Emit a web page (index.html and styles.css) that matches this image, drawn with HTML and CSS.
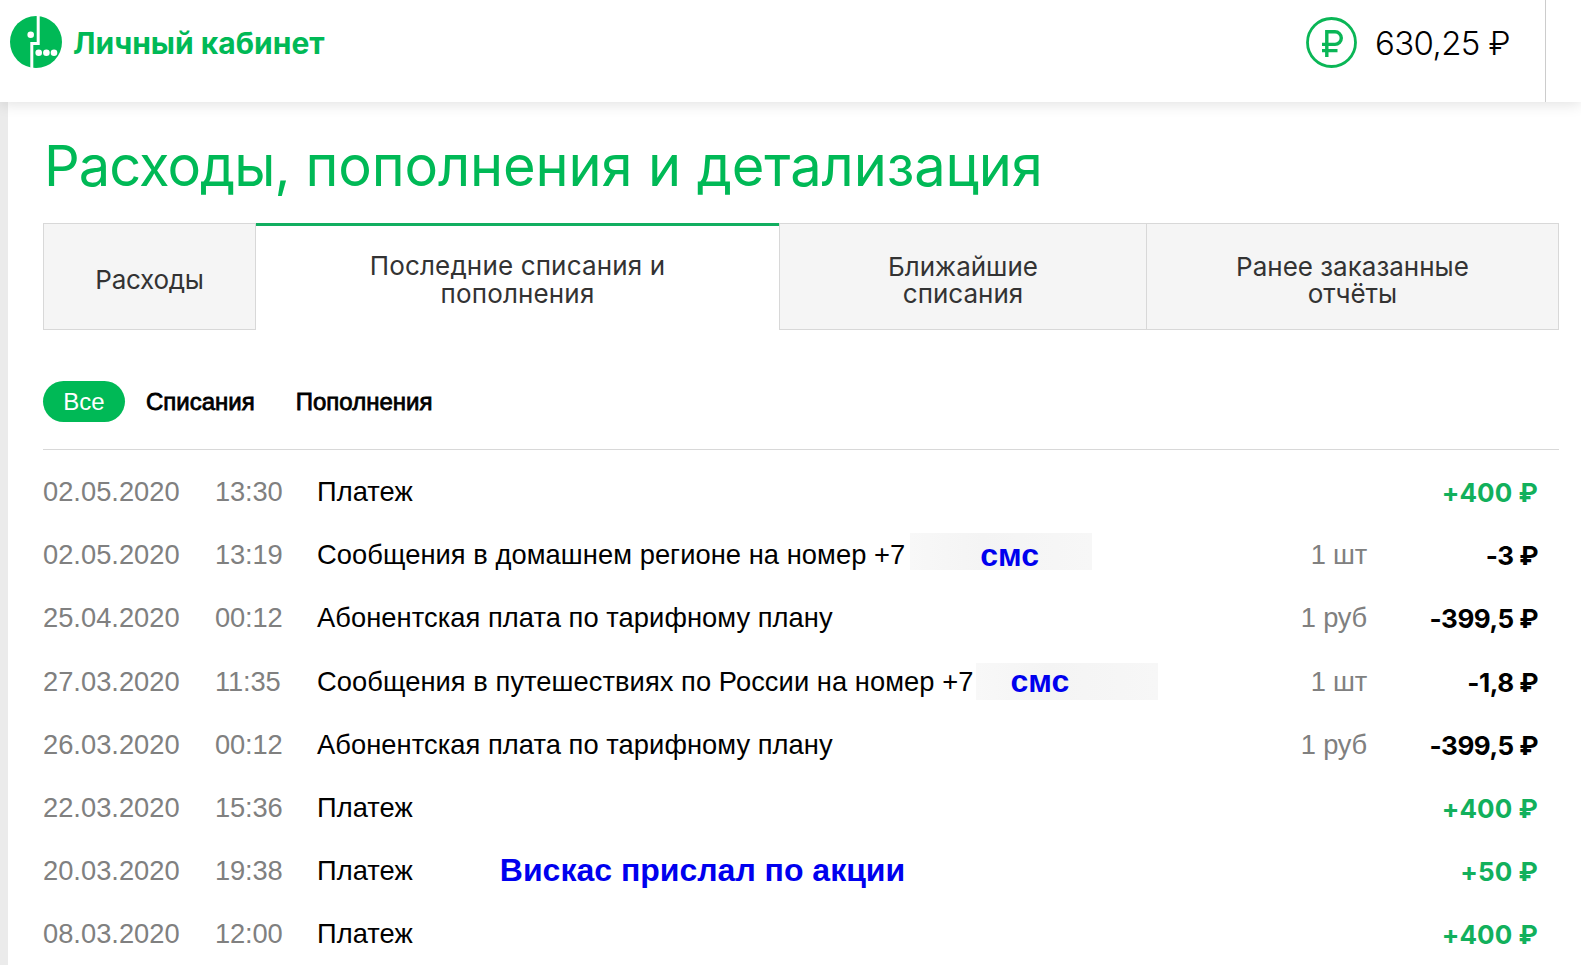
FILE: index.html
```
<!DOCTYPE html>
<html lang="ru">
<head>
<meta charset="utf-8">
<title>Личный кабинет</title>
<link rel="stylesheet" href="styles.css">
</head>
<body>
<header class="header">
  <a class="brand">
    <svg class="logo" viewBox="0 0 52 52" width="52" height="52">
      <circle cx="26" cy="26" r="26" fill="#00b956"/>
      <path d="M28.2 0V27.4H21.8V52" fill="none" stroke="#fff" stroke-width="3"/>
      <g fill="#fff"><circle cx="20.7" cy="18.8" r="3.3"/><circle cx="28.7" cy="36.8" r="3.3"/><circle cx="36.4" cy="36.8" r="3.3"/><circle cx="44" cy="36.8" r="3.3"/></g>
    </svg>
    <span class="brand-name">Личный кабинет</span>
  </a>
  <div class="balance">
    <svg class="coin" viewBox="0 0 51 51" width="51" height="51" fill="none" stroke="#0ab656">
      <circle cx="25.5" cy="25.5" r="24" stroke-width="2.8"/>
      <path d="M20.8 40V14.8H29a6.3 6.3 0 0 1 0 12.6H16M16 33.6H31.5" stroke-width="3.4"/>
    </svg>
    <span class="balance-sum">630,25 ₽</span>
  </div>
</header>
<main class="page">
  <h1 class="title"><span class="title-lead">Расходы,</span> пополнения и детализация</h1>
  <nav class="tabs">
    <a class="tab tab-short">Расходы</a>
    <a class="tab tab-active">Последние списания и<br>пополнения</a>
    <a class="tab">Ближайшие<br>списания</a>
    <a class="tab">Ранее заказанные<br>отчёты</a>
  </nav>
  <div class="filters">
    <a class="filter filter-active">Все</a>
    <a class="filter">Списания</a>
    <a class="filter">Пополнения</a>
  </div>
  <section class="list">
    <div class="row"><span class="date">02.05.2020</span><span class="time">13:30</span><span class="desc">Платеж</span><span class="unit"></span><span class="sum plus">+400 ₽</span></div>
    <div class="row"><span class="date">02.05.2020</span><span class="time">13:19</span><span class="desc">Сообщения в домашнем регионе на номер +7<span class="mask mask-home">смс</span></span><span class="unit">1 шт</span><span class="sum">-3 ₽</span></div>
    <div class="row"><span class="date">25.04.2020</span><span class="time">00:12</span><span class="desc">Абонентская плата по тарифному плану</span><span class="unit">1 руб</span><span class="sum">-399,5 ₽</span></div>
    <div class="row"><span class="date">27.03.2020</span><span class="time">11:35</span><span class="desc">Сообщения в путешествиях по России на номер +7<span class="mask mask-trip">смс</span></span><span class="unit">1 шт</span><span class="sum">-1,8 ₽</span></div>
    <div class="row"><span class="date">26.03.2020</span><span class="time">00:12</span><span class="desc">Абонентская плата по тарифному плану</span><span class="unit">1 руб</span><span class="sum">-399,5 ₽</span></div>
    <div class="row"><span class="date">22.03.2020</span><span class="time">15:36</span><span class="desc">Платеж</span><span class="unit"></span><span class="sum plus">+400 ₽</span></div>
    <div class="row"><span class="date">20.03.2020</span><span class="time">19:38</span><span class="desc">Платеж<span class="note">Вискас прислал по акции</span></span><span class="unit"></span><span class="sum plus">+50 ₽</span></div>
    <div class="row"><span class="date">08.03.2020</span><span class="time">12:00</span><span class="desc">Платеж</span><span class="unit"></span><span class="sum plus">+400 ₽</span></div>
  </section>
</main>
</body>
</html>
```
FILE: styles.css
```
* { box-sizing: border-box; }
html, body { margin: 0; height: 965px; overflow: hidden; background: #fff; }
body {
  display: flex;
  flex-direction: column;
  font-family: "Liberation Sans", Arial, sans-serif;
  color: #000;
}
.header {
  flex: none;
  z-index: 1;
  display: flex;
  justify-content: space-between;
  height: 102px;
  padding: 0 35px 0 10px;
  background: #fff;
  box-shadow: 0 2px 14px rgba(0, 0, 0, .12);
  font-family: Inter, sans-serif;
}
.brand { display: flex; align-items: center; gap: 11px; height: 84px; }
.brand-name { padding-top: 2px; font-size: 30px; font-weight: 700; color: #00b956; letter-spacing: 0; white-space: nowrap; }
.balance { display: flex; align-items: flex-start; gap: 18px; padding: 17px 35px 0 0; border-right: 1px solid #ccc; }
.balance-sum { font-size: 33px; font-weight: 350; line-height: 53px; letter-spacing: -.6px; white-space: nowrap; }
.page { flex: 1; min-height: 0; padding: 29px 22px 0 36px; border-left: 8px solid #ebebeb; overflow: hidden; }
.title {
  margin: 0;
  height: 92px;
  font: 400 56px/70px Inter, sans-serif;
  letter-spacing: -.12px;
  color: #00b956;
  white-space: nowrap;
}
.title-lead { letter-spacing: -.95px; }
.tabs { display: grid; grid-template-columns: 213px 523px 368px 412px; height: 107px; margin-left: -1px; font: 400 26px/27.5px Inter, sans-serif; color: #333; }
.tab {
  display: flex;
  align-items: center;
  justify-content: center;
  padding-top: 7px;
  text-align: center;
  white-space: nowrap;
  background: #f5f5f5;
  border: 1px solid #d8d8d8;
}
.tab-short { letter-spacing: -.25px; }
.tab + .tab { border-left: 0; }
.tab-active { padding-top: 3px; letter-spacing: .15px; background: #fff; border: 0; border-top: 3px solid #12ae60; }
.tab-active + .tab { border-left: 1px solid #d8d8d8; }
.filters { display: flex; align-items: center; gap: 41px; height: 120px; margin-left: -1px; padding-top: 24px; border-bottom: 1px solid #d8d8d8; font-size: 24px; }
.filter { -webkit-text-stroke: .8px #000; line-height: 41px; white-space: nowrap; }
.filter-active { width: 82px; margin-right: -20px; border-radius: 21px; background: #00b956; color: #fff; text-align: center; -webkit-text-stroke: 0; }
.list { margin-left: -1px; padding: 10px 21px 0 0; font-size: 27.3px; }
.row { display: grid; grid-template-columns: 172px 102px 1fr 120px 171px; height: 63.2px; line-height: 63.2px; white-space: nowrap; }
.date, .time, .unit { color: #808080; }
.time { letter-spacing: -.15px; }
.unit, .sum { text-align: right; }
.unit { letter-spacing: -.2px; }
.desc { display: flex; letter-spacing: .06px; }
.sum { font: 650 26px/66px Inter, sans-serif; letter-spacing: -.5px; }
.plus { color: #12b05c; letter-spacing: .1px; }
.mask {
  width: 182px;
  height: 37px;
  margin: 10px 0 0 5px;
  background: linear-gradient(90deg, #f8f8f8, #f4f4f4 40%, #f7f7f7);
  font-size: 32px;
  font-weight: 700;
  line-height: 44px;
  letter-spacing: 0;
  color: #0000ee;
}
.mask-home { padding-left: 70px; }
.mask-trip { margin: 13px 0 0 3px; padding-left: 34px; line-height: 36px; }
.note { margin-left: 87px; font-size: 32px; font-weight: 700; letter-spacing: 0; color: #0000ee; }
```
